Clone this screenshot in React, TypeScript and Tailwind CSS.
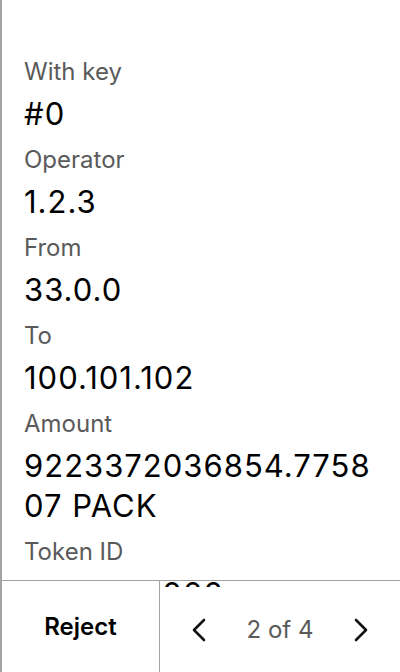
import React from "react";

const fields = [
  { label: "With key", value: "#0" },
  { label: "Operator", value: "1.2.3" },
  { label: "From", value: "33.0.0" },
  { label: "To", value: "100.101.102" },
  { label: "Amount", value: "9223372036854.775807 PACK" },
  { label: "Token ID", value: "1100000.000" },
];

function Chevron({ dir }: { dir: "left" | "right" }) {
  return (
    <svg width="14" height="24" viewBox="0 0 14 24" fill="none" stroke="#111" strokeWidth="2.6" strokeLinecap="round" strokeLinejoin="round">
      {dir === "left" ? <path d="M12 2 L2 12 L12 22" /> : <path d="M2 2 L12 12 L2 22" />}
    </svg>
  );
}

export default function App() {
  return (
    <div
      className="relative w-[400px] h-[672px] overflow-hidden bg-white border-l-2 border-[#a3a3a3]"
      style={{ fontFamily: "Inter, 'Noto Sans', sans-serif" }}
    >
      <div className="flex flex-col gap-[10px] pt-[56px] pl-[22px] pr-[20px]">
        {fields.map((f) => (
          <div key={f.label} className="flex flex-col">
            <div className="text-[24px] leading-[32px] text-[#5a5a5a]">{f.label}</div>
            <div className="mt-[6px] text-[31px] leading-[40px] tracking-[1px] text-black break-all">{f.value}</div>
          </div>
        ))}
      </div>

      <div className="absolute left-0 right-0 bottom-0 h-[92px] border-t border-[#a3a3a3] flex">
        <button className="w-[158px] h-full bg-white border-r border-[#a3a3a3] text-[24px] font-semibold text-black">
          Reject
        </button>
        <div className="flex-1 flex flex-col">
          <div className="h-[6px]" />
          <div className="flex-1 bg-white flex items-center justify-between px-[32px]">
            <Chevron dir="left" />
            <span className="text-[24px] text-[#5a5a5a]">2 of 4</span>
            <Chevron dir="right" />
          </div>
        </div>
      </div>
    </div>
  );
}
